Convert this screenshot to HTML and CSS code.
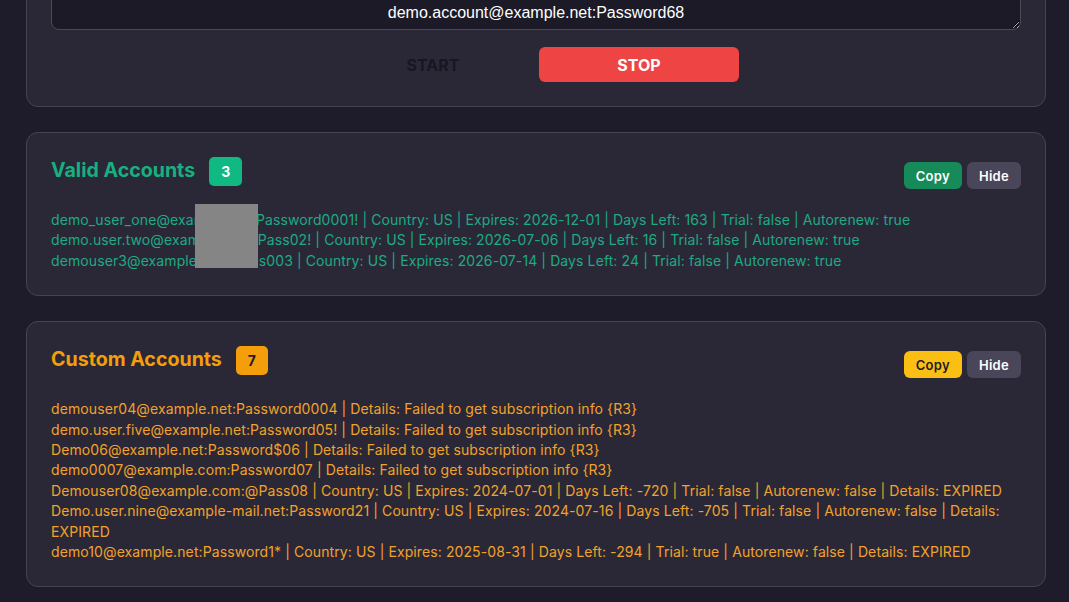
FILE: index.html
```html
<!DOCTYPE html>
<html>
  <head>
    <title>Checker</title>
    <link rel="stylesheet" href="styles.css">
  </head>
  <body>
    <main>
      <section class='card input-card'>
        <textarea class='combo-input' spellcheck='false'>demo.account.one@example.net:Password01
demo.account@example.net:Password68</textarea>
        <div class='controls'>
          <button class='btn-start' disabled>START</button>
          <button class='btn-stop'>STOP</button>
        </div>
      </section>

      <section class='card result valid'>
        <header class='result-head'>
          <div class='result-title'>
            <h2>Valid Accounts</h2>
            <span class='badge'>3</span>
          </div>
          <div class='actions'>
            <button class='btn-copy'>Copy</button>
            <button class='btn-hide'>Hide</button>
          </div>
        </header>
        <div class='result-list'>
          <p>demo_user_one@example.net:Password0001! | Country: US | Expires: 2026-12-01 | Days Left: 163 | Trial: false | Autorenew: true</p>
          <p>demo.user.two@example.com:Pass02! | Country: US | Expires: 2026-07-06 | Days Left: 16 | Trial: false | Autorenew: true</p>
          <p>demouser3@example.com:Pass003 | Country: US | Expires: 2026-07-14 | Days Left: 24 | Trial: false | Autorenew: true</p>
          <div class='redact'></div>
        </div>
      </section>

      <section class='card result custom'>
        <header class='result-head'>
          <div class='result-title'>
            <h2>Custom Accounts</h2>
            <span class='badge'>7</span>
          </div>
          <div class='actions'>
            <button class='btn-copy'>Copy</button>
            <button class='btn-hide'>Hide</button>
          </div>
        </header>
        <div class='result-list'>
          <p>demouser04@example.net:Password0004 | Details: Failed to get subscription info {R3}</p>
          <p>demo.user.five@example.net:Password05! | Details: Failed to get subscription info {R3}</p>
          <p>Demo06@example.net:Password$06 | Details: Failed to get subscription info {R3}</p>
          <p>demo0007@example.com:Password07 | Details: Failed to get subscription info {R3}</p>
          <p>Demouser08@example.com:@Pass08 | Country: US | Expires: 2024-07-01 | Days Left: -720 | Trial: false | Autorenew: false | Details: EXPIRED</p>
          <p>Demo.user.nine@example-mail.net:Password21 | Country: US | Expires: 2024-07-16 | Days Left: -705 | Trial: false | Autorenew: false | Details: EXPIRED</p>
          <p>demo10@example.net:Password1* | Country: US | Expires: 2025-08-31 | Days Left: -294 | Trial: true | Autorenew: false | Details: EXPIRED</p>
        </div>
      </section>
    </main>
  </body>
</html>
```

FILE: styles.css
```css
html, body {
  margin: 0;
  background: #1e1c2a;
  color: white;
  font-family: Inter, 'Noto Sans', sans-serif;
}

/* page layout, scrolled down a bit */
main {
  width: 1020px;
  margin: -56px 0 0 26px;
  display: flex;
  flex-direction: column;
  gap: 25px;
}

.card {
  background: #2a2837;
  border: 1px solid #454356;
  border-radius: 12px;
  padding: 24px;
}

/* combo input */
.combo-input {
  display: block;
  width: 100%;
  height: 61px;
  box-sizing: border-box;
  padding: 10px 12px 5px;
  background: #1c1a27;
  border: 1px solid #4b4959;
  border-radius: 8px;
  color: white;
  font: 16px/22px 'Liberation Sans', Arial, sans-serif;
  text-align: center;
  overflow: hidden;
}

.controls {
  display: flex;
  justify-content: center;
  gap: 6px;
  margin-top: 17px;
}

.controls button {
  width: 200px;
  height: 35px;
  padding-top: 2px;
  border: none;
  border-radius: 6px;
  font: 700 16px Inter, sans-serif;
}

.btn-start {
  background: transparent;
  color: #171621;
}

.btn-stop {
  background: #ef4444;
  color: white;
}

/* result panels */
.result-head {
  display: flex;
  justify-content: space-between;
  align-items: flex-start;
  margin-bottom: 21px;
}

.result-title {
  display: flex;
  align-items: center;
  gap: 14px;
}

.result-title h2 {
  margin: 0 0 3px;
  font-size: 19.6px;
  font-weight: 700;
}

.badge {
  height: 29px;
  line-height: 29px;
  padding: 0 12px;
  border-radius: 5px;
  font-size: 14px;
  font-weight: 700;
}

.actions {
  display: flex;
  gap: 5px;
  margin-top: 5px;
}

.actions button {
  height: 27px;
  padding: 0 12px;
  border: none;
  border-radius: 6px;
  font: 600 13px Inter, sans-serif;
  letter-spacing: .3px;
}

.btn-hide {
  background: #4a4659;
  color: white;
}

.result-list {
  position: relative;
  font-size: 14px;
  line-height: 20.4px;
  letter-spacing: .1px;
}

.result-list p {
  margin: 0;
}

.redact {
  position: absolute;
  left: 144px;
  top: -6px;
  width: 63px;
  height: 64px;
  background: #858585;
}

/* colours per panel */
.valid h2 { color: #17b07f; }
.valid .badge { background: #10b981; color: white; }
.valid .btn-copy { background: #178a5a; color: white; }
.valid .result-list { color: #1eaa84; }

.custom h2 { color: #f59e0b; }
.custom .badge { background: #f59e0b; color: #1e1c2a; }
.custom .btn-copy { background: #fbbf13; color: #1e1c2a; }
.custom .result-list { color: #f2a22a; }
```
